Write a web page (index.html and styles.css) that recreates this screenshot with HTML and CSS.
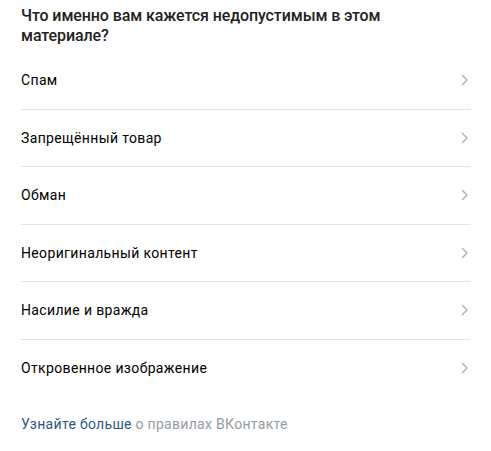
FILE: index.html
```html
<!DOCTYPE html>
<html lang="ru">
<head>
<meta charset="utf-8">
<link rel="stylesheet" href="styles.css">
</head>
<body>
<div class="panel">
  <h1 class="title">Что именно вам кажется недопустимым в этом материале?</h1>
  <ul class="list">
    <li class="row"><span>Спам</span><svg class="chev" viewBox="0 0 8 12" width="8" height="12"><path d="M1.5 1.5 6 6l-4.5 4.5" /></svg></li>
    <li class="row"><span>Запрещённый товар</span><svg class="chev" viewBox="0 0 8 12" width="8" height="12"><path d="M1.5 1.5 6 6l-4.5 4.5" /></svg></li>
    <li class="row"><span>Обман</span><svg class="chev" viewBox="0 0 8 12" width="8" height="12"><path d="M1.5 1.5 6 6l-4.5 4.5" /></svg></li>
    <li class="row"><span>Неоригинальный контент</span><svg class="chev" viewBox="0 0 8 12" width="8" height="12"><path d="M1.5 1.5 6 6l-4.5 4.5" /></svg></li>
    <li class="row"><span>Насилие и вражда</span><svg class="chev" viewBox="0 0 8 12" width="8" height="12"><path d="M1.5 1.5 6 6l-4.5 4.5" /></svg></li>
    <li class="row"><span>Откровенное изображение</span><svg class="chev" viewBox="0 0 8 12" width="8" height="12"><path d="M1.5 1.5 6 6l-4.5 4.5" /></svg></li>
  </ul>
  <p class="footer"><a class="link" href="#">Узнайте больше</a> о правилах ВКонтакте</p>
</div>
</body>
</html>
```
FILE: styles.css
```css
html, body {
  margin: 0;
  padding: 0;
  background: #fff;
}
body {
  font-family: Roboto, "Noto Sans", Arial, sans-serif;
}
.panel {
  width: 450px;
  padding: 6px 20px 0 21px;
}
.title {
  margin: 0;
  max-width: 420px;
  font-size: 16px;
  line-height: 20px;
  font-weight: 500;
  color: #222;
  letter-spacing: -0.1px;
}
.list {
  list-style: none;
  margin: 6px 0 0;
  padding: 0;
}
.row {
  display: flex;
  align-items: center;
  justify-content: space-between;
  height: 56.5px;
  font-size: 14px;
  letter-spacing: 0.35px;
  color: #000;
  border-bottom: 1px solid #e1e3e6;
}
.row:last-child {
  border-bottom: none;
}
.chev {
  fill: none;
  stroke: #aeb7c2;
  stroke-width: 1.6;
  stroke-linecap: round;
  stroke-linejoin: round;
  margin-right: 2px;
}
.footer {
  margin: 18px 0 0;
  font-size: 14px;
  line-height: 20px;
  letter-spacing: 0.3px;
  color: #939ba5;
}
.link {
  color: #2a5885;
  text-decoration: none;
}
```
